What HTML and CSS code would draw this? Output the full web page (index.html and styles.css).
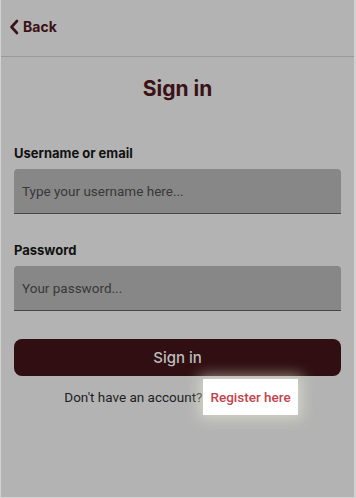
FILE: index.html
```html
<!DOCTYPE html>
<html lang="en">
<head>
    <meta charset="UTF-8">
    <meta name="viewport" content="width=device-width, initial-scale=1.0">
    <title>Sign in</title>
    <link rel="stylesheet" href="styles.css">
</head>
<body>
    <div class="screen">
        <header class="top-bar">
            <a class="back-link" href="#">
                <svg class="back-icon" width="10" height="16" viewBox="0 0 10 16">
                    <path d="M8 2 L2.5 8 L8 14" fill="none" stroke="currentColor" stroke-width="2.6" stroke-linecap="round" stroke-linejoin="round"/>
                </svg>
                <span>Back</span>
            </a>
        </header>
        <main class="content">
            <h1 class="title">Sign in</h1>
            <form class="login-form">
                <label class="field-label" for="username">Username or email</label>
                <input class="field-input" type="text" id="username" placeholder="Type your username here...">

                <label class="field-label label-password" for="password">Password</label>
                <input class="field-input" type="password" id="password" placeholder="Your password...">

                <button class="submit-button" type="button">Sign in</button>
            </form>
            <p class="register-line">
                <span>Don't have an account?</span>
                <a class="register-link" href="#">Register here</a>
            </p>
        </main>
    </div>
</body>
</html>
```

FILE: styles.css
```css
body {
    margin: 0;
    padding: 0;
    font-family: Inter, "Noto Sans", Arial, sans-serif;
    background-color: #b3b3b3;
}

.screen {
    width: 356px;
    height: 498px;
    box-sizing: border-box;
    background-color: #b3b3b3;
    border-left: 1px solid #d2d2d2;
    border-right: 2px solid #d2d2d2;
    border-bottom: 1px solid #d2d2d2;
    overflow: hidden;
}

.top-bar {
    height: 57px;
    box-sizing: border-box;
    border-bottom: 1px solid #999999;
    display: flex;
    align-items: center;
    padding: 0 0 3px 8px;
}

.back-link {
    display: flex;
    align-items: center;
    gap: 4px;
    color: #3b1216;
    text-decoration: none;
    font-size: 14px;
    font-weight: 700;
}

.back-icon {
    display: block;
}

.content {
    padding: 0 13px;
}

.title {
    margin: 18px 0 0;
    text-align: center;
    font-size: 21px;
    line-height: 28px;
    font-weight: 700;
    color: #3b1216;
}

.login-form {
    display: flex;
    flex-direction: column;
    margin-top: 42px;
}

.field-label {
    font-size: 13px;
    line-height: 16px;
    font-weight: 700;
    color: #111111;
}

.label-password {
    margin-top: 28px;
}

.field-input {
    margin-top: 8px;
    height: 45px;
    box-sizing: border-box;
    padding: 0 8px;
    border: none;
    border-bottom: 1px solid #474747;
    border-radius: 4px 4px 0 0;
    background-color: #878787;
    font-family: Roboto, Arial, sans-serif;
    font-size: 13.5px;
    color: #333333;
}

.field-input::placeholder {
    color: #383838;
}

.submit-button {
    margin-top: 28px;
    height: 37px;
    border: none;
    border-radius: 8px;
    background-color: #300e11;
    color: #bdbdbd;
    font-family: inherit;
    font-size: 15px;
    font-weight: 500;
    cursor: pointer;
}

.register-line {
    margin: 3px 0 0;
    padding-left: 7px;
    display: flex;
    justify-content: center;
    align-items: center;
    font-family: Roboto, Arial, sans-serif;
    font-size: 13.5px;
    color: #1e1e1e;
}

.register-link {
    margin-left: 1px;
    padding: 0 7px;
    height: 36px;
    display: flex;
    align-items: center;
    background-color: #ffffff;
    color: #c3434b;
    font-weight: 500;
    text-decoration: none;
    box-shadow: 0 0 14px 4px rgba(235, 240, 215, 0.55);
}
```
